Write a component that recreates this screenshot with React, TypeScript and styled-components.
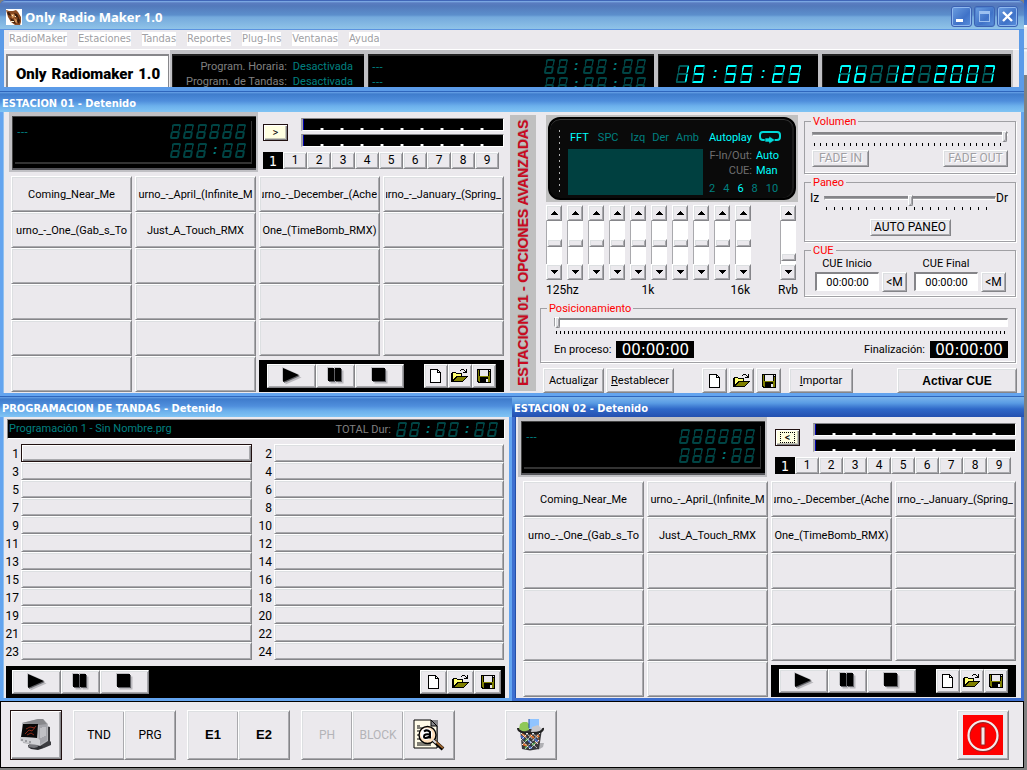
import React from "react";
import styled, { createGlobalStyle, css } from "styled-components";

const SANS = 'Roboto, "Liberation Sans", Arial, sans-serif';
const ARIAL = '"Liberation Sans", Arial, sans-serif';
const TAHOMA = '"DejaVu Sans Condensed", "DejaVu Sans", Tahoma, sans-serif';
const FACE = "#ebe9ed";
const LCD_ON = "#00ffff";
const LCD_MID = "#008080";
const LCD_OFF = "#004444";
const LCD_GHOST = "#005a5a";

const GlobalStyle = createGlobalStyle`
  * { box-sizing: border-box; }
  body { margin: 0; background: #808080; font: 11px/13px ${SANS}; color: #000; }
  button, input { font: inherit; color: inherit; margin: 0; }
  fieldset { margin: 0; min-width: 0; }
`;

/* ---------- shell ---------- */

const Desktop = styled.div`
  display: grid;
  grid-template-columns: minmax(0, 1fr) 3px;
  min-height: 100vh;
`;

const BackWindowEdge = styled.div`
  background: linear-gradient(#2f5fc0 0, #5a8fd8 25px, #fff 25px, #fff 27px, ${FACE} 27px, ${FACE} 48px, #a0a0a4 48px, #fff 50px, ${FACE} 52px, ${FACE} 75px, #808080 75px);
`;

const Shell = styled.main`
  display: flex;
  flex-direction: column;
  min-width: 0;
`;

const MainWindow = styled.section`
  background: #5b9be8;
  border-radius: 6px 6px 0 0;
  padding-bottom: 4px;
`;

const MainTitle = styled.header`
  height: 30px;
  padding: 3px 6px 0 6px;
  display: flex;
  align-items: center;
  gap: 3px;
  border-top: 1px solid #4066b8;
  border-bottom: 1px solid #5b93e0;
  border-radius: 6px 6px 0 0;
  background: linear-gradient(#84b4ec 0, #5a7cc0 2px, #5379bb 5px, #5c8fcc 14px, #74a9dc 16px, #8fc3e8 28px);
  h1 {
    flex: 1;
    margin: 0;
    color: #fff;
    font: bold 13px/18px "Open Sans", "Noto Sans", sans-serif;
  }
`;

const CaptionButtons = styled.div`
  display: flex;
  gap: 2px;
`;

const CaptionButton = styled.button<{ $dim?: boolean }>`
  width: 21px;
  height: 21px;
  padding: 0;
  display: grid;
  place-items: center;
  border: 1px solid #3c62b4;
  border-radius: 3px;
  box-shadow: inset 0 0 0 1px ${(p) => (p.$dim ? "#4d80cc" : "#8fb8ee")};
  background: linear-gradient(135deg, #6d9fe0, #3f72c8 60%, #5a90dc);
`;

const MainBody = styled.div`
  margin: 0 5px 0 4px;
  background: ${FACE};
`;

const MenuBar = styled.nav`
  height: 20px;
  padding: 2px 5px;
  display: flex;
  align-items: flex-start;
  gap: 11px;
  border-bottom: 1px solid #fff;
  a {
    background: #fff;
    color: #a0a0a4;
    text-decoration: none;
    font: 11px/14px ${TAHOMA};
  }
`;

const DisplayRow = styled.div`
  height: 37px;
  display: grid;
  grid-template-columns: 166px minmax(0, 196fr) minmax(0, 290fr) minmax(0, 164fr) minmax(0, 193fr);
  padding-right: 6px;
  overflow: hidden;
`;

const Brand = styled.div`
  margin: 4px 1px 0 2px;
  border: solid #87878b;
  border-width: 2px 1px 0 2px;
  background: #fff;
  display: flex;
  align-items: center;
  justify-content: center;
  gap: 5px;
  font: 900 15px/20px Roboto, ${ARIAL};
`;

const TopLcd = styled.div<{ $center?: boolean }>`
  background: #000;
  border: solid #c0c0c4;
  border-width: 4px 2px 0 2px;
  box-shadow: inset 1px 2px #222;
  display: flex;
  justify-content: ${(p) => (p.$center ? "center" : "space-between")};
  padding: ${(p) => (p.$center ? "11px 0 0" : "5px 9px 0 4px")};
`;

const StatusTable = styled.dl`
  margin: 0 0 0 auto;
  padding: 0 2px 0 0;
  display: grid;
  grid-template-columns: auto auto;
  column-gap: 6px;
  line-height: 15px;
  height: 30px;
  text-align: right;
  white-space: nowrap;
  dt { color: #808080; }
  dd { margin: 0; color: ${LCD_MID}; }
`;

const Dashes = styled.div`
  color: ${LCD_MID};
  font: 11px/15px ${ARIAL};
`;

const Stack = styled.div<{ $gap: number }>`
  display: flex;
  flex-direction: column;
  align-items: flex-end;
  gap: ${(p) => p.$gap}px;
`;

/* ---------- seven segment display ---------- */

type SegSize = "large" | "small";
const SEG = {
  large: { w: 11, h: 18, t: 2, gap: 5 },
  small: { w: 9, h: 15, t: 2, gap: 4 },
};

const SegRow = styled.div<{ $size: SegSize }>`
  display: flex;
  flex: none;
  gap: ${(p) => SEG[p.$size].gap}px;
  height: ${(p) => SEG[p.$size].h}px;
`;

const SegCell = styled.span<{ $size: SegSize }>`
  width: ${(p) => SEG[p.$size].w}px;
  display: flex;
  flex-direction: column;
  transform: skewX(-10deg);
`;

const SegHalf = styled.span<{ $size: SegSize; $c: string[] }>`
  flex: 1;
  border-style: solid;
  border-width: ${(p) => SEG[p.$size].t}px;
  border-color: ${(p) => p.$c.join(" ")};
  border-radius: 2px;
  ${(p) => p.$c[2] === "transparent" && css`border-bottom-width: 0;`}
`;

const SegColon = styled.span<{ $size: SegSize; $color: string }>`
  width: ${(p) => SEG[p.$size].w}px;
  display: flex;
  flex-direction: column;
  align-items: center;
  justify-content: space-evenly;
  transform: skewX(-10deg);
  &::before,
  &::after {
    content: "";
    width: 2px;
    height: 2px;
    background: ${(p) => p.$color};
  }
`;

const SEGMENTS: Record<string, string> = {
  "0": "abcdef", "1": "bc", "2": "abged", "3": "abgcd", "4": "fgbc",
  "5": "afgcd", "6": "fgecd", "7": "abc", "8": "abcdefg", "9": "abfgcd", "-": "",
};

function SegmentDisplay({ value, size = "small", lit = false }: { value: string; size?: SegSize; lit?: boolean }) {
  return (
    <SegRow $size={size} role="img" aria-label={value}>
      {value.split("").map((ch, i) => {
        if (ch === ":") return <SegColon key={i} $size={size} $color={lit ? LCD_ON : LCD_MID} />;
        const on = SEGMENTS[ch] ?? "";
        const c = (s: string) => (lit && on.includes(s) ? LCD_ON : lit ? LCD_GHOST : LCD_OFF);
        return (
          <SegCell key={i} $size={size}>
            <SegHalf $size={size} $c={[c("a"), c("b"), "transparent", c("f")]} />
            <SegHalf $size={size} $c={[c("g"), c("c"), c("d"), c("e")]} />
          </SegCell>
        );
      })}
    </SegRow>
  );
}

/* ---------- child windows ---------- */

const ChildWindow = styled.section<{ $active?: boolean }>`
  min-width: 0;
  display: flex;
  flex-direction: column;
  background: ${FACE};
  border: solid ${(p) => (p.$active ? "#3d6fd0" : "#63a4ef")};
  border-width: 0 3px 3px 3px;
  box-shadow: inset 1px 0 ${(p) => (p.$active ? "#2450a8" : "#8fc0f0")};
`;

const ChildTitle = styled.h2<{ $active?: boolean }>`
  height: 21px;
  margin: 0 -3px;
  padding: 2px 2px 0;
  border-top: 1px solid #2f66bc;
  color: #fff;
  font: bold 11px/20px ${TAHOMA};
  background: ${(p) =>
    p.$active
      ? "linear-gradient(#7ab4ec, #5a9ce4 6px, #2f68c8 12px, #2450b0)"
      : "linear-gradient(#6aa4e8 0, #3f7ccc 2px, #4f8edc 9px, #6cb0ec 14px, #80c4f4)"};
`;

const WindowRow = styled.div`
  display: grid;
  grid-template-columns: minmax(0, 1fr) minmax(0, 1fr);
`;

const StationOneBody = styled.div`
  display: grid;
  grid-template-columns: minmax(0, 506fr) minmax(0, 512fr);
`;

/* ---------- buttons ---------- */

const bevel = css`
  border: 1px solid;
  border-color: #fff #858589 #858589 #fff;
  box-shadow: inset 1px 1px #dcdfe1, inset -1px -1px #a9a9ad;
  background: ${FACE};
`;

const PushButton = styled.button<{ $w?: number; $h?: number; $bold?: boolean }>`
  ${bevel}
  flex: none;
  width: ${(p) => (p.$w ? `${p.$w}px` : "auto")};
  height: ${(p) => p.$h ?? 25}px;
  padding: 0;
  display: flex;
  align-items: center;
  justify-content: center;
  white-space: nowrap;
  ${(p) => p.$bold && css`font: bold 12px/14px ${ARIAL};`}
  &:disabled { color: #a0a0a4; text-shadow: 1px 1px #fff; }
  u { text-underline-offset: 1px; }
`;

const CapsButton = styled(PushButton)`
  font-size: 12px;
`;

const Pad = styled.button<{ $align: string }>`
  ${bevel}
  height: 36px;
  width: 100%;
  padding: 1px 2px 0;
  display: block;
  & > span {
    display: flex;
    justify-content: ${(p) => p.$align};
    overflow: hidden;
    white-space: nowrap;
    line-height: 16px;
  }
`;

/* ---------- station ---------- */

const StationPanel = styled.div`
  min-width: 0;
  padding-bottom: 1px;
`;

const StationHead = styled.div<{ $inset: number }>`
  height: 64px;
  display: grid;
  grid-template-columns: 260px minmax(0, 1fr);
  padding-right: 5px;
  & > :first-child { margin: 0 6px 0 ${(p) => p.$inset}px; }
`;

const StationLcd = styled.div`
  width: 249px;
  height: 60px;
  padding: 5px 4px 4px 3px;
  background: #000;
  border: solid #c0c0c4;
  border-width: 4px 2px 2px 3px;
  box-shadow: inset 0 -2px #55555a, inset 1px 1px #444;
`;

const StationLcdInner = styled.div`
  height: 43px;
  padding: 3px 6px 0 2px;
  border-right: 1px solid #333;
  border-bottom: 2px solid #333;
  display: flex;
  justify-content: space-between;
`;

const StationSide = styled.div`
  padding-top: 6px;
  display: flex;
  flex-direction: column;
  gap: 5px;
`;

const MeterRow = styled.div`
  display: flex;
  justify-content: space-between;
`;

const CreamButton = styled.button`
  width: 25px;
  height: 17px;
  margin-top: 6px;
  padding: 0;
  border: 1px solid #201010;
  background: #ffffe1;
  box-shadow: inset 1px 1px #fff, inset -1px -1px #858589, inset -2px -2px #c8c8b8;
  line-height: 13px;
  span { display: block; margin: 0 3px; }
  span[data-focus="true"] { outline: 1px dotted #000; outline-offset: -2px; }
`;

const Meters = styled.div`
  width: 203px;
  display: flex;
  flex-direction: column;
  gap: 3px;
`;

const Meter = styled.div`
  height: 13px;
  border: solid;
  border-width: 1px 1px 1px 2px;
  border-color: #858589 #fff #fff #a0a0a4;
  background: #000;
  box-shadow: inset 1px 0 #0000b0;
  padding: 9px 0 0 17px;
  &::before {
    content: "";
    display: block;
    width: 180px;
    height: 2px;
    background: linear-gradient(90deg, #777 0, #777 1px, #fff 1px, #fff 3px, #777 3px, #777 4px, #000 4px) 0 0 / 20px 2px;
  }
`;

const BankRow = styled.div`
  display: flex;
  align-items: flex-start;
`;

const BankCurrent = styled.output`
  width: 20px;
  height: 17px;
  background: #000;
  color: #fff;
  text-align: center;
  font: 14px/18px ${TAHOMA};
`;

const PadArea = styled.div`
  display: grid;
  grid-template-columns: minmax(0, 1fr) minmax(0, 1fr);
  gap: 3px;
  padding: 0 5px 0 8px;
`;

const PadColumns = styled.div`
  display: grid;
  grid-template-columns: minmax(0, 1fr) minmax(0, 1fr);
  column-gap: 3px;
`;

const Deck = styled.div<{ $pad: number; $padEnd: number }>`
  height: 32px;
  background: #000;
  display: flex;
  align-items: center;
  justify-content: space-between;
  padding: 0 ${(p) => p.$padEnd}px 0 ${(p) => p.$pad}px;
`;

const DeckSpacer = styled.div`
  padding-top: 4px;
`;

const Group = styled.div`
  display: flex;
`;

/* ---------- icons ---------- */

function Transport({ kind }: { kind: "play" | "pause" | "stop" }) {
  const shape =
    kind === "play" ? <path d="M3 2 L19 9 L3 16 Z" /> :
    kind === "pause" ? <path d="M4 2h6v13h-6z M11 2h6v13h-6z" /> :
    <rect x="4" y="2" width="13" height="13" />;
  return (
    <svg width="24" height="20" viewBox="0 0 24 20" aria-hidden="true">
      <g fill="#c0c0c4" transform="translate(-1 -1)">{shape}</g>
      <g fill="#9a9a9e" transform="translate(2.5 2.5)" opacity="0.6">{shape}</g>
      <g fill="#55555a" transform="translate(1 1)" opacity="0.9">{shape}</g>
      <g fill="#000">{shape}</g>
    </svg>
  );
}

const NewIcon = () => (
  <svg width="16" height="16" viewBox="0 0 16 16" shapeRendering="crispEdges" aria-hidden="true">
    <path d="M2 1h8v1h1v1h1v1h1v11h-11z" fill="#000" />
    <path d="M3 2h6v3h3v9h-9z" fill="#fff" />
    <path d="M10 3h1v1h-1z" fill="#fff" />
  </svg>
);

const OpenIcon = () => (
  <svg width="18" height="16" viewBox="0 0 18 16" shapeRendering="crispEdges" aria-hidden="true">
    <path d="M10 1h3v1h-3z M9 2h1v1h-1z M13 2h1v1h-1z M15 1h1v4h-4v-1h2v-1h1z" fill="#000" />
    <path d="M1 4h4v1h6v3h6v1h-1v1h-1v1h-1v1h-1v1h-1v1h-12v-9h1z" fill="#000" />
    <path d="M2 5h3v1h5v2h-5v1h-1v1h-1v1h-1z" fill="#ffff70" />
    <path d="M6 9h9v1h-1v1h-1v1h-1v1h-9v-1h1v-1h1v-1h1z" fill="#808000" />
  </svg>
);

const SaveIcon = () => (
  <svg width="16" height="16" viewBox="0 0 16 16" shapeRendering="crispEdges" aria-hidden="true">
    <path d="M1 1h14v14h-13v-1h-1z" fill="#000" />
    <path d="M2 2h1v11h1v1h-1v-1h-1z M3 8h10v1h-10z M13 4h1v10h-1z M3 9h1v5h-1z M12 9h1v5h-1z" fill="#808000" />
    <path d="M4 2h8v6h-8z" fill={FACE} />
    <path d="M13 2h1v1h-1z" fill={FACE} />
    <path d="M10 11h2v3h-2z" fill={FACE} />
  </svg>
);

const AppIcon = () => (
  <svg width="16" height="16" viewBox="0 0 16 16" aria-hidden="true">
    <rect width="16" height="16" fill="#fff" />
    <path d="M0 1l3 1 4 0 3-1 2 2 3 5v5l-1 3H9l-4-3-3-5z" fill="#8a4a22" />
    <path d="M1 2l3 2 1 3-3-1z M8 4l3 1 2 4-3-1z M4 9l4 2 2 4-4-2z M12 8l2 3-1 4-2-3z" fill="#3a1c0c" />
    <path d="M5 5l3 0 1 3-3 1z M8 9l3 2 0 3-2-1z M1 1l1 1-1 1z" fill="#d0945c" />
    <path d="M6 6h1v1h-1z M9 7h1v1h-1z M5 12h3v1h-3z" fill="#fff0d0" />
  </svg>
);

const LoopIcon = () => (
  <svg width="24" height="16" viewBox="0 0 24 16" aria-hidden="true">
    <rect x="2" y="3" width="20" height="8" rx="3" fill="none" stroke="#00d8d8" strokeWidth="2" />
    <path d="M7 9h4v-2l6 4-6 4v-2h-4z" fill="#00d8d8" stroke="#0a0a0a" strokeWidth="0.600" />
  </svg>
);

const Arrow = ({ down }: { down?: boolean }) => (
  <svg width="7" height="4" viewBox="0 0 7 4" shapeRendering="crispEdges" aria-hidden="true">
    <path d={down ? "M0 0h7v1h-1v1h-1v1h-1v1h-1v-1h-1v-1h-1v-1h-1z" : "M3 0h1v1h1v1h1v1h1v1h-7v-1h1v-1h1v-1h1z"} />
  </svg>
);

const MonitorIcon = () => (
  <svg width="34" height="34" viewBox="0 0 34 34" aria-hidden="true">
    <path d="M27 8l4 1v14l1 1v3l-7 3-4-1z" fill="#3c3c40" />
    <path d="M9 27h12l4 3-6 2-7-1-3-2z" fill="#2c2c30" />
    <path d="M3 5l16-4 5 0 5 5v17l-8 5-17-3z" fill="#b4b4b8" />
    <path d="M20 6l8 0v16l-8 5z" fill="#a4a4aa" />
    <path d="M3 5l16-4 5 0 4 5-8 1z" fill="#88888c" />
    <path d="M4 6l15 0-1 14-16-1z" fill="#080808" />
    <path d="M6 16l4-4 3 1 4-5M7 11l4-2 5 1M8 17l4-2 3 2" stroke="#8a2818" fill="none" />
    <path d="M1 19l17 1 3 2v5l-3 0-17-4z" fill="#d0d0d4" />
    <path d="M2 22h2M6 23h2M10 24h2" stroke="#66666a" />
    <path d="M22 10v10M24 9v10M26 9v9" stroke="#dcdce0" />
    <path d="M10 26l8 1 1 2-4 1-6-1z" fill="#77777c" />
  </svg>
);

const FindIcon = () => (
  <svg width="32" height="32" viewBox="0 0 32 32" aria-hidden="true">
    <path d="M17 1h8v28h-6z" fill="#88888c" />
    <path d="M1 1h17l6 6v22H1z" fill="#fffbe8" stroke="#000" />
    <path d="M18 1v6h6z" fill="#88888c" stroke="#000" />
    <path d="M4 7h3M4 9h9M4 12h5M4 16h3M4 20h4M4 24h7M4 26h14" stroke="#000" />
    <circle cx="14.500" cy="16" r="8.500" fill="#ffe0bc" stroke="#000" strokeWidth="1.400" />
    <circle cx="13.500" cy="15" r="6" fill="#fff" />
    <path d="M11 12.500q3-2.500 6 .500v6.500M17 15.500q-6-1-6 2t6 0" fill="none" stroke="#000" strokeWidth="2" />
    <path d="M21 22l9 8" stroke="#000" strokeWidth="4" />
    <path d="M22 22l8 7" stroke="#9a6430" strokeWidth="2" />
    <path d="M20 21l3 3" stroke="#d8d8dc" strokeWidth="2" />
  </svg>
);

const TrashIcon = () => (
  <svg width="28" height="32" viewBox="0 0 28 32" aria-hidden="true">
    <path d="M20 24l7 0-1 4-5 3z" fill="#b0b0b4" />
    <path d="M3 9l2 21 8 1.500 9-1.500 3-20z" fill="#38383c" />
    <path d="M3 5l3-2h4l2 2v6l-6 2-4-3z" fill="#90c858" />
    <path d="M12 0h10v7l-4 3h-6z" fill="#90c4ff" />
    <path d="M12 0v9" stroke="#2050a0" />
    <path d="M15 8l6-2 4 4-4 4-7-1z" fill="#c8c8cc" />
    <path d="M1 9q0 5 13 5t12-5" fill="none" stroke="#222" strokeWidth="2" />
    <path d="M5 15l4 3M13 16l4 3M20 16l2 2M6 25l4 2M19 24l3-3" stroke="#e07028" strokeWidth="2" />
    <path d="M4 17l3 3M11 21l3 3M18 20l3 3M12 28l3 1" stroke="#4068c8" strokeWidth="2" />
    <path d="M8 22l3-2M15 26l3-2M8 29l2-1" stroke="#48a048" strokeWidth="2" />
    <path d="M4 14l16 15M9 14l12 11M15 14l7 6M4 20l9 10M23 14L8 30M17 14L5 26M11 14l-6 6M22 21l-9 9" stroke="#f0f0f0" strokeDasharray="2 1" />
  </svg>
);

const PowerIcon = () => (
  <svg width="40" height="40" viewBox="0 0 40 40" aria-hidden="true">
    <rect width="40" height="40" fill="#ff0000" />
    <circle cx="20.500" cy="21.500" r="14.500" fill="none" stroke="#a02020" strokeWidth="2.500" />
    <circle cx="20" cy="20.500" r="14.500" fill="none" stroke="#f4eaea" strokeWidth="2.200" />
    <path d="M18 12h4v18h-4z" fill="#f4eaea" stroke="#a02020" />
  </svg>
);

/* ---------- station parts ---------- */

function FileButtons({ width }: { width: number }) {
  return (
    <Group>
      <PushButton $w={width} $h={24} aria-label="Nuevo"><NewIcon /></PushButton>
      <PushButton $w={width} $h={24} aria-label="Abrir"><OpenIcon /></PushButton>
      <PushButton $w={width} $h={24} aria-label="Guardar"><SaveIcon /></PushButton>
    </Group>
  );
}

function TransportButtons() {
  return (
    <Group>
      <PushButton $w={49} $h={24} aria-label="Reproducir"><Transport kind="play" /></PushButton>
      <PushButton $w={39} $h={24} aria-label="Pausa"><Transport kind="pause" /></PushButton>
      <PushButton $w={49} $h={24} aria-label="Detener"><Transport kind="stop" /></PushButton>
    </Group>
  );
}

const PADS: { label: string; align?: string }[][] = [
  [{ label: "Coming_Near_Me" }, { label: "urno_-_One_(Gab_s_To" }],
  [{ label: "urno_-_April_(Infinite_M" }, { label: "Just_A_Touch_RMX" }],
  [{ label: "urno_-_December_(Ache", align: "flex-end" }, { label: "One_(TimeBomb_RMX)" }],
  [{ label: "urno_-_January_(Spring_", align: "flex-end" }],
];

function PadColumn({ column, rows }: { column: number; rows: number }) {
  return (
    <div>
      {Array.from({ length: rows }, (_, r) => {
        const pad = PADS[column][r];
        return (
          <Pad key={r} $align={pad?.align ?? "center"} aria-label={pad ? undefined : `Vacío ${r + 1}`}>
            <span>{pad?.label}</span>
          </Pad>
        );
      })}
    </div>
  );
}

function Station({ arrow, focused, inset }: { arrow: string; focused?: boolean; inset: number }) {
  return (
    <StationPanel>
      <StationHead $inset={inset}>
        <StationLcd>
          <StationLcdInner>
            <Dashes>---</Dashes>
            <Stack $gap={4}>
              <SegmentDisplay value="888888" />
              <SegmentDisplay value="888:88" />
            </Stack>
          </StationLcdInner>
        </StationLcd>
        <StationSide>
          <MeterRow>
            <CreamButton><span data-focus={focused ? "true" : "false"}>{arrow}</span></CreamButton>
            <Meters><Meter /><Meter /></Meters>
          </MeterRow>
          <BankRow>
            <BankCurrent>1</BankCurrent>
            {[1, 2, 3, 4, 5, 6, 7, 8, 9].map((n) => (
              <CapsButton key={n} $w={24} $h={17}>{n}</CapsButton>
            ))}
          </BankRow>
        </StationSide>
      </StationHead>
      <PadArea>
        <PadColumns>
          <PadColumn column={0} rows={6} />
          <PadColumn column={1} rows={6} />
        </PadColumns>
        <div>
          <PadColumns>
            <PadColumn column={2} rows={5} />
            <PadColumn column={3} rows={5} />
          </PadColumns>
          <DeckSpacer>
            <Deck $pad={8} $padEnd={8}>
              <TransportButtons />
              <FileButtons width={24} />
            </Deck>
          </DeckSpacer>
        </div>
      </PadArea>
    </StationPanel>
  );
}

/* ---------- advanced options ---------- */

const Advanced = styled.div`
  min-width: 0;
  display: grid;
  grid-template-columns: 26px minmax(0, 1fr);
  gap: 4px;
  padding: 3px 3px 0 1px;
`;

const Banner = styled.div`
  background: #c0c0c0;
  height: 276px;
  writing-mode: vertical-rl;
  transform: rotate(180deg);
  text-align: center;
  color: #c80a20;
  font: bold 14px/26px ${ARIAL};
  text-shadow: 1px 0 #80606080;
  white-space: nowrap;
`;

const AdvancedMain = styled.div`
  min-width: 0;
  display: flex;
  flex-direction: column;
`;

const AdvancedTop = styled.div`
  height: 184px;
  display: flex;
  justify-content: space-between;
  padding: 0 2px 0 6px;
`;

const DeviceColumn = styled.div`
  width: 252px;
  flex: none;
`;

const Bezel = styled.div`
  height: 87px;
  padding: 2px;
  background: #c0c0c0;
`;

const Device = styled.div`
  height: 83px;
  border-radius: 12px;
  background: #0a0a0a;
  border: 2px solid #000;
  box-shadow: inset 0 1px #3a3a3a, inset -2px 0 #1c1c1c;
  display: grid;
  grid-template-columns: 4px 135px minmax(0, 1fr);
  column-gap: 6px;
  padding: 7px 4px 0 8px;
`;

const DotLine = styled.div`
  height: 62px;
  margin-top: 4px;
  background: linear-gradient(#b0b0b0 2px, transparent 2px) 1px 0 / 1px 6px repeat-y;
`;

const Lcd = styled.span<{ $tone?: "on" | "off" | "label" }>`
  color: ${(p) => (p.$tone === "on" ? LCD_ON : p.$tone === "label" ? "#707070" : LCD_MID)};
`;

const LcdLine = styled.div<{ $gap: number; $h: number }>`
  display: flex;
  align-items: center;
  white-space: nowrap;
  gap: ${(p) => p.$gap}px;
  height: ${(p) => p.$h}px;
`;

const ModeLine = styled(LcdLine)`
  justify-content: space-between;
  padding: 0 4px 0 2px;
`;

const LcdPair = styled.span<{ $gap: number }>`
  display: flex;
  gap: ${(p) => p.$gap}px;
`;

const Scope = styled.div`
  height: 46px;
  margin-top: 1px;
  background: #004040;
`;

const LcdGrid = styled.div`
  display: grid;
  grid-template-columns: 43px auto;
  column-gap: 4px;
  line-height: 15px;
  white-space: nowrap;
  & > :nth-child(odd) { text-align: right; }
`;

const Equalizer = styled.div`
  display: flex;
  justify-content: space-between;
  padding: 3px 2px 0 0;
`;

const Bands = styled.div`
  display: flex;
  gap: 5px;
`;

const BandBox = styled.div`
  width: 16px;
  display: flex;
  flex-direction: column;
`;

const BandInput = styled.input`
  appearance: none;
  writing-mode: vertical-lr;
  direction: rtl;
  width: 16px;
  height: 43px;
  background: #fff;
  border-left: 1px solid #a9a9ad;
  &::-webkit-slider-thumb {
    appearance: none;
    width: 15px;
    height: 8px;
    ${bevel}
  }
`;

const EqLabels = styled.div`
  display: grid;
  grid-template-columns: 1fr auto 1fr 48px;
  padding-top: 4px;
  line-height: 13px;
  font-size: 12px;
  & > :nth-child(3) { text-align: right; }
  & > :nth-child(4) { text-align: right; white-space: nowrap; }
`;

function Band({ label, value }: { label: string; value: number }) {
  return (
    <BandBox>
      <PushButton $w={16} $h={16} aria-label={`${label} +`}><Arrow /></PushButton>
      <BandInput type="range" min={0} max={100} defaultValue={value} aria-label={label} />
      <PushButton $w={16} $h={16} aria-label={`${label} -`}><Arrow down /></PushButton>
    </BandBox>
  );
}

const SideColumn = styled.div`
  width: 212px;
  flex: none;
  display: flex;
  flex-direction: column;
  gap: 2px;
`;

const Box = styled.fieldset<{ $h: number }>`
  height: ${(p) => p.$h}px;
  border: 1px solid #a0a0a4;
  box-shadow: 1px 1px #fff, inset 0 -1px #fff;
  padding: 0 7px;
  legend {
    color: #ff0000;
    padding: 0 2px;
    margin-left: -1px;
    line-height: 13px;
  }
`;

const Slider = styled.input<{ $track: number }>`
  appearance: none;
  display: block;
  width: 100%;
  height: 12px;
  margin: 0;
  background: transparent;
  &::-webkit-slider-runnable-track {
    height: ${(p) => p.$track}px;
    border: solid;
    border-width: 2px 1px 1px 1px;
    border-color: #858589 #fff #fff #a0a0a4;
    background: ${(p) => (p.$track > 5 ? "#fff" : "#a0a0a4")};
  }
  &::-webkit-slider-thumb {
    appearance: none;
    width: 5px;
    height: 11px;
    margin-top: -3px;
    ${bevel}
    border-radius: 0 0 2px 2px;
  }
`;

const Ticks = styled.div<{ $step: number }>`
  height: 3px;
  margin: 3px 2px 0;
  background: linear-gradient(90deg, #000 1px, transparent 1px) 0 0 / ${(p) => p.$step}px 3px;
`;

const Spread = styled.div<{ $top: number }>`
  display: flex;
  justify-content: space-between;
  align-items: flex-start;
  padding-top: ${(p) => p.$top}px;
`;

const PanRow = styled.div`
  display: grid;
  grid-template-columns: 14px minmax(0, 1fr) 14px;
  padding-top: 3px;
  margin: 0 -2px;
  font-size: 12px;
`;

const Centered = styled.div`
  display: flex;
  justify-content: center;
  padding-top: 9px;
`;

const CueGrid = styled.div`
  display: flex;
  justify-content: space-between;
  padding: 0 2px 0 3px;
`;

const CueField = styled.div`
  display: grid;
  grid-template-columns: 64px 25px;
  column-gap: 3px;
  label { text-align: center; line-height: 13px; }
  label + * { grid-row: 2; }
`;

const TimeInput = styled.input`
  height: 19px;
  width: 64px;
  margin-top: 2px;
  padding: 0;
  text-align: center;
  border: solid;
  border-width: 2px 1px 1px 2px;
  border-color: #858589 #fff #fff #858589;
  background: #fff;
`;

const CueButtonSlot = styled.div`
  grid-row: 2;
  padding-top: 2px;
`;

const TimeReadout = styled.output`
  width: 78px;
  height: 17px;
  background: #000;
  color: #fff;
  text-align: center;
  font: 15px/18px "DejaVu Sans", sans-serif;
`;

const ReadoutPair = styled.div`
  display: flex;
  align-items: center;
  gap: 5px;
`;

const PositionWrap = styled.div`
  padding: 3px 2px 0 0;
`;

const PositionBody = styled.div`
  padding: 1px 0 0 6px;
`;

const ActionRow = styled.div`
  display: flex;
  gap: 2px;
  padding: 5px 1px 0 3px;
`;

const ActionGap = styled.span<{ $grow: number }>`
  flex: ${(p) => p.$grow} 1 0;
`;

function CueTime({ id, label }: { id: string; label: string }) {
  return (
    <CueField>
      <label htmlFor={id}>{label}</label>
      <TimeInput id={id} defaultValue="00:00:00" />
      <CueButtonSlot><CapsButton $w={25} $h={20}>&lt;M</CapsButton></CueButtonSlot>
    </CueField>
  );
}

function AdvancedOptions() {
  return (
    <Advanced>
      <Banner>ESTACION 01 - OPCIONES AVANZADAS</Banner>
      <AdvancedMain>
        <AdvancedTop>
          <DeviceColumn>
            <Bezel>
              <Device>
                <DotLine />
                <div>
                  <ModeLine $gap={0} $h={22}>
                    <LcdPair $gap={9}>
                      <Lcd $tone="on">FFT</Lcd>
                      <Lcd>SPC</Lcd>
                    </LcdPair>
                    <LcdPair $gap={7}>
                      <Lcd>Izq</Lcd>
                      <Lcd>Der</Lcd>
                      <Lcd>Amb</Lcd>
                    </LcdPair>
                  </ModeLine>
                  <Scope />
                </div>
                <div>
                  <LcdLine $gap={6} $h={22}>
                    <Lcd $tone="on">Autoplay</Lcd>
                    <LoopIcon />
                  </LcdLine>
                  <LcdGrid>
                    <Lcd $tone="label">F-In/Out:</Lcd>
                    <Lcd $tone="on">Auto</Lcd>
                    <Lcd $tone="label">CUE:</Lcd>
                    <Lcd $tone="on">Man</Lcd>
                  </LcdGrid>
                  <LcdLine $gap={8} $h={20}>
                    <Lcd>2</Lcd>
                    <Lcd>4</Lcd>
                    <Lcd $tone="on">6</Lcd>
                    <Lcd>8</Lcd>
                    <Lcd>10</Lcd>
                  </LcdLine>
                </div>
              </Device>
            </Bezel>
            <Equalizer>
              <Bands>
                {[125, 250, 500, 750, 1000, 2000, 4000, 8000, 12000, 16000].map((hz) => (
                  <Band key={hz} label={`${hz} Hz`} value={50} />
                ))}
              </Bands>
              <Band label="Reverb" value={8} />
            </Equalizer>
            <EqLabels>
              <span>125hz</span>
              <span>1k</span>
              <span>16k</span>
              <span>Rvb</span>
            </EqLabels>
          </DeviceColumn>
          <SideColumn>
            <Box $h={59}>
              <legend>Volumen</legend>
              <Slider $track={4} type="range" min={0} max={100} defaultValue={100} aria-label="Volumen" />
              <Ticks $step={6} />
              <Spread $top={4}>
                <CapsButton $w={57} $h={17} disabled>FADE IN</CapsButton>
                <CapsButton $w={65} $h={17} disabled>FADE OUT</CapsButton>
              </Spread>
            </Box>
            <Box $h={66}>
              <legend>Paneo</legend>
              <PanRow>
                <span>Iz</span>
                <div>
                  <Slider $track={4} type="range" min={0} max={100} defaultValue={50} aria-label="Paneo" />
                  <Ticks $step={8} />
                </div>
                <span>Dr</span>
              </PanRow>
              <Centered><CapsButton $w={81} $h={17}>AUTO PANEO</CapsButton></Centered>
            </Box>
            <Box $h={53}>
              <legend>CUE</legend>
              <CueGrid>
                <CueTime id="cue-start" label="CUE Inicio" />
                <CueTime id="cue-end" label="CUE Final" />
              </CueGrid>
            </Box>
          </SideColumn>
        </AdvancedTop>
        <PositionWrap>
          <Box $h={61}>
            <legend>Posicionamiento</legend>
            <PositionBody>
              <Slider $track={9} type="range" min={0} max={100} defaultValue={0} aria-label="Posicionamiento" />
              <Ticks $step={4} />
              <Spread $top={7}>
                <ReadoutPair>En proceso:<TimeReadout>00:00:00</TimeReadout></ReadoutPair>
                <ReadoutPair>Finalización:<TimeReadout>00:00:00</TimeReadout></ReadoutPair>
              </Spread>
            </PositionBody>
          </Box>
        </PositionWrap>
        <ActionRow>
          <PushButton $w={61}><span>Actuali<u>z</u>ar</span></PushButton>
          <PushButton $w={68}><span><u>R</u>establecer</span></PushButton>
          <ActionGap $grow={24} />
          <PushButton $w={25} aria-label="Nuevo"><NewIcon /></PushButton>
          <PushButton $w={25} aria-label="Abrir"><OpenIcon /></PushButton>
          <PushButton $w={25} aria-label="Guardar"><SaveIcon /></PushButton>
          <ActionGap $grow={4} />
          <PushButton $w={64}><span><u>I</u>mportar</span></PushButton>
          <ActionGap $grow={40} />
          <PushButton $w={120} $bold>Activar CUE</PushButton>
        </ActionRow>
      </AdvancedMain>
    </Advanced>
  );
}

/* ---------- schedule ---------- */

const InfoBar = styled.div`
  height: 20px;
  margin: 2px 4px 0;
  padding: 0 7px 0 1px;
  display: flex;
  align-items: center;
  background: #000;
  color: ${LCD_MID};
  border: 1px solid;
  border-color: #858589 #fff #fff #858589;
`;

const InfoName = styled.span`
  flex: 1;
  line-height: 18px;
`;

const InfoLabel = styled.span`
  color: #808080;
  margin-right: 6px;
`;

const SlotGrid = styled.ol`
  list-style: none;
  margin: 5px 0 6px;
  padding: 0 5px 0 0;
  display: grid;
  grid-template-columns: minmax(0, 1fr) minmax(0, 1fr);
  column-gap: 3px;
  font-size: 12px;
  li {
    height: 18px;
    display: grid;
    grid-template-columns: 16px minmax(0, 1fr);
    column-gap: 2px;
    line-height: 20px;
    text-align: right;
    white-space: nowrap;
  }
  li:nth-child(even) { grid-template-columns: 17px minmax(0, 1fr); }
`;

const Slot = styled.button<{ $current?: boolean }>`
  ${bevel}
  height: 18px;
  ${(p) => p.$current && css`border-color: #201010; box-shadow: inset 1px 1px #fff, inset -1px -1px #858589, inset -2px -2px #a9a9ad;`}
`;

const ScheduleDeck = styled.div`
  margin: 0 4px 0 3px;
`;

/* ---------- bottom bar ---------- */

const Dock = styled.footer`
  height: 67px;
  padding: 8px 14px 0 9px;
  display: flex;
  gap: 11px;
  background: ${FACE};
  border: 1px solid #000;
`;

const DockGap = styled.span<{ $w?: number }>`
  ${(p) => (p.$w ? css`width: ${p.$w}px;` : css`flex: 1;`)}
`;

const DockButton = styled(PushButton)<{ $framed?: boolean }>`
  width: 52px;
  height: 50px;
  font-size: ${(p) => (p.$bold ? 13 : 12)}px;
  ${(p) => p.$framed && css`border-color: #201010; box-shadow: inset 1px 1px #fff, inset -1px -1px #858589, inset -2px -2px #a9a9ad;`}
  & + & { margin-left: -1px; }
  &:disabled { text-shadow: none; color: #b4b4b8; }
`;

export default function App() {
  return (
    <Desktop>
      <GlobalStyle />
      <Shell>
        <MainWindow>
          <MainTitle>
            <AppIcon />
            <h1>Only Radio Maker 1.0</h1>
            <CaptionButtons>
              <CaptionButton aria-label="Minimizar">
                <svg width="13" height="13"><path d="M1 9h7v3H1z" fill="#fff" /></svg>
              </CaptionButton>
              <CaptionButton $dim aria-label="Maximizar">
                <svg width="13" height="13"><path d="M1 1h11v11H1zM2 4v7h9V4z" fillRule="evenodd" fill="#9cc0f0" /></svg>
              </CaptionButton>
              <CaptionButton aria-label="Cerrar">
                <svg width="13" height="13"><path d="M2 2l9 9M11 2l-9 9" stroke="#fff" strokeWidth="2.400" /></svg>
              </CaptionButton>
            </CaptionButtons>
          </MainTitle>
          <MainBody>
            <MenuBar>
              {["RadioMaker", "Estaciones", "Tandas", "Reportes", "Plug-Ins", "Ventanas", "Ayuda"].map((m) => (
                <a key={m} href={`#${m.toLowerCase()}`}>{m}</a>
              ))}
            </MenuBar>
            <DisplayRow>
              <Brand><span>Only</span><span>Radiomaker</span><span>1.0</span></Brand>
              <TopLcd>
                <StatusTable>
                  <dt>Program. Horaria:</dt>
                  <dd>Desactivada</dd>
                  <dt>Program. de Tandas:</dt>
                  <dd>Desactivada</dd>
                </StatusTable>
              </TopLcd>
              <TopLcd>
                <Dashes>---<br />---</Dashes>
                <Stack $gap={3}>
                  <SegmentDisplay value="88:88:88" />
                  <SegmentDisplay value="88:88:88" />
                </Stack>
              </TopLcd>
              <TopLcd $center>
                <SegmentDisplay value="15:55:29" size="large" lit />
              </TopLcd>
              <TopLcd $center>
                <SegmentDisplay value="06-12-2007" size="large" lit />
              </TopLcd>
            </DisplayRow>
          </MainBody>
        </MainWindow>

        <ChildWindow>
          <ChildTitle>ESTACION 01 - Detenido</ChildTitle>
          <StationOneBody>
            <Station arrow=">" inset={6} />
            <AdvancedOptions />
          </StationOneBody>
        </ChildWindow>

        <WindowRow>
          <ChildWindow>
            <ChildTitle>PROGRAMACION DE TANDAS - Detenido</ChildTitle>
            <InfoBar>
              <InfoName>Programación 1 - Sin Nombre.prg</InfoName>
              <InfoLabel>TOTAL Dur:</InfoLabel>
              <SegmentDisplay value="88:88:88" />
            </InfoBar>
            <SlotGrid>
              {Array.from({ length: 24 }, (_, i) => (
                <li key={i}>
                  {i + 1}
                  <Slot $current={i === 0} aria-label={`Tanda ${i + 1}`} />
                </li>
              ))}
            </SlotGrid>
            <ScheduleDeck>
              <Deck $pad={6} $padEnd={4}>
                <TransportButtons />
                <FileButtons width={27} />
              </Deck>
            </ScheduleDeck>
          </ChildWindow>
          <ChildWindow $active>
            <ChildTitle $active>ESTACION 02 - Detenido</ChildTitle>
            <Station arrow="<" focused inset={3} />
          </ChildWindow>
        </WindowRow>

        <Dock>
          <DockButton $framed aria-label="Equipo"><MonitorIcon /></DockButton>
          <Group>
            <DockButton>TND</DockButton>
            <DockButton>PRG</DockButton>
          </Group>
          <Group>
            <DockButton $bold>E1</DockButton>
            <DockButton $bold>E2</DockButton>
          </Group>
          <Group>
            <DockButton disabled>PH</DockButton>
            <DockButton disabled>BLOCK</DockButton>
            <DockButton aria-label="Buscar"><FindIcon /></DockButton>
          </Group>
          <DockGap $w={28} />
          <DockButton aria-label="Papelera"><TrashIcon /></DockButton>
          <DockGap />
          <DockButton aria-label="Salir"><PowerIcon /></DockButton>
        </Dock>
      </Shell>
      <BackWindowEdge />
    </Desktop>
  );
}
